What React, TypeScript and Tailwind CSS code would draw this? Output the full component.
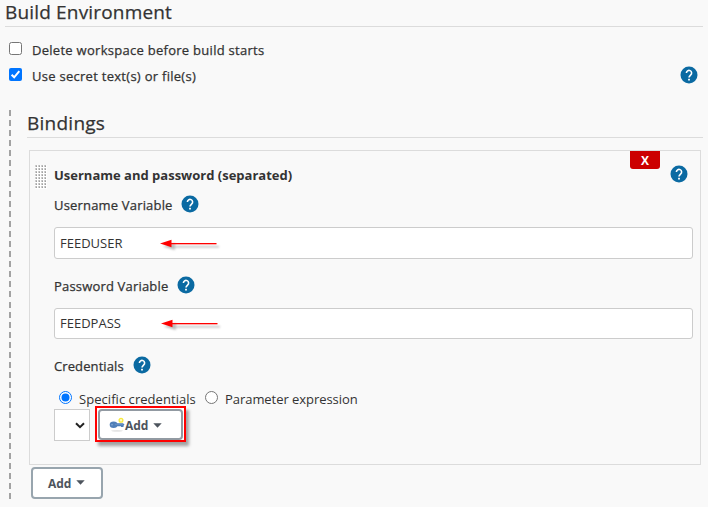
import React from 'react';

function Help() {
  return (
    <svg className="h-[18px] w-[18px] shrink-0" viewBox="0 0 18 18">
      <circle cx="9" cy="9" r="8.5" fill="#0b6aa2" />
      <path d="M6.4 7a2.6 2.6 0 1 1 4.3 1.95C9.8 9.8 9 10.3 9 11.6" fill="none" stroke="#fff" strokeWidth="1.6" />
      <rect x="8.1" y="12.8" width="1.8" height="1.7" fill="#fff" />
    </svg>
  );
}

function Checkbox({ checked = false }: { checked?: boolean }) {
  return (
    <svg className="h-[13px] w-[13px] shrink-0" viewBox="0 0 13 13">
      {checked ? (
        <>
          <rect width="13" height="13" rx="2" fill="#0075ff" />
          <path d="M2.6 6.7 5.2 9.3 10.3 3.2" fill="none" stroke="#fff" strokeWidth="2" />
        </>
      ) : (
        <rect x="0.5" y="0.5" width="12" height="12" rx="2" fill="#fff" stroke="#767676" />
      )}
    </svg>
  );
}

function Radio({ checked = false }: { checked?: boolean }) {
  return (
    <svg className="h-[13px] w-[13px] shrink-0" viewBox="0 0 13 13">
      <circle cx="6.5" cy="6.5" r="6" fill="#fff" stroke={checked ? '#0075ff' : '#767676'} />
      {checked && <circle cx="6.5" cy="6.5" r="4" fill="#0075ff" />}
    </svg>
  );
}

function Arrow() {
  return (
    <svg className="h-4 w-[64px] shrink-0 overflow-visible" viewBox="0 0 64 16">
      <g fill="#555" opacity="0.4" transform="translate(3 3)" className="blur-[1px]">
        <path d="M0 7.5 12 4v7z" />
        <rect x="11" y="7" width="45" height="1.5" />
      </g>
      <path d="M0 7.5 11.5 3.8v7.4z" fill="#f00" />
      <rect x="11" y="7" width="45.5" height="1.3" fill="#f00" />
    </svg>
  );
}

function Grip() {
  const cells: React.ReactNode[] = [];
  for (let r = 0; r < 8; r++) {
    for (let c = 0; c < 4; c++) {
      cells.push(<rect key={`${r}-${c}`} x={c * 3} y={r * 3} width="2" height="2" fill="#cfcfcf" />);
      cells.push(<rect key={`${r}-${c}b`} x={c * 3 + 1} y={r * 3} width="1" height="1" fill="#b8b8b8" />);
      cells.push(<rect key={`${r}-${c}c`} x={c * 3 + 1} y={r * 3 + 1} width="1" height="1" fill="#a0a0a0" />);
    }
  }
  return (
    <svg className="h-6 w-3 shrink-0" viewBox="0 0 12 24" shapeRendering="crispEdges">
      <rect width="12" height="24" fill="#fff" />
      {cells}
    </svg>
  );
}

function Key() {
  return (
    <svg className="h-4 w-4 shrink-0" viewBox="0 0 16 16">
      <ellipse cx="8" cy="13.8" rx="6" ry="0.9" fill="#e4e4e4" />
      <circle cx="12" cy="3.2" r="1.9" fill="#fffbc0" stroke="#f7ea3c" strokeWidth="1.3" />
      <ellipse cx="4.6" cy="7.8" rx="3.9" ry="3.3" fill="#4f7fb8" />
      <path d="M7 6.2h7l1.5 1.3-1 1.2v1.4h-2.5V9.3H7z" fill="#4f7fb8" />
      <circle cx="3" cy="7.7" r="0.8" fill="#8fb0d8" />
      <path d="M6 7.3h8" stroke="#7199cc" strokeWidth="0.7" />
    </svg>
  );
}

function Caret() {
  return (
    <svg className="h-[5px] w-[9px] shrink-0" viewBox="0 0 9 5">
      <path d="M0.3 0.3h8.4L4.5 4.7z" fill="#4d545d" />
    </svg>
  );
}

export default function App() {
  return (
    <div className="h-[507px] w-[708px] overflow-hidden whitespace-nowrap bg-[#f9f9f9] pl-[5px] pr-[5px] font-['Open_Sans','Noto_Sans',sans-serif] text-[13px] text-[#333]">
      <h1 className="h-[27px] border-b border-[#dcdcdc] text-[19px] leading-[25px] tracking-[0.17px] [-webkit-text-stroke:0.25px_#333]">Build Environment</h1>
      <div className="mt-[10px] flex h-[26px] pl-1">
        <div className="mt-[5px]"><Checkbox /></div>
        <span className="ml-[10px] leading-[27px] tracking-[0.28px] [-webkit-text-stroke:0.25px_#333]">Delete workspace before build starts</span>
      </div>
      <div className="flex h-[26px] pl-1">
        <div className="mt-[5px]"><Checkbox checked /></div>
        <span className="ml-[10px] leading-[27px] tracking-[0.28px] [-webkit-text-stroke:0.25px_#333]">Use secret text(s) or file(s)</span>
        <div className="ml-auto mr-[5px] mt-[3px]"><Help /></div>
      </div>

      <div className="ml-1 mt-[21px] flex h-[389px]">
        <div className="h-[389px] w-[2px] shrink-0 bg-[repeating-linear-gradient(to_bottom,#a3a3a3_0px,#a3a3a3_6px,transparent_6px,transparent_10.08px)]" />
        <div className="ml-4 flex-1">
          <h2 className="h-[28px] border-b border-[#dcdcdc] text-[19px] leading-[26px] tracking-[0.25px] [-webkit-text-stroke:0.25px_#333]">Bindings</h2>
          <section className="ml-[2px] mr-[2px] mt-[12px] h-[315px] border border-[#dcdcdc]">
            <div className="flex h-[38px] pl-[5px]">
              <div className="mt-[14px]"><Grip /></div>
              <span className="ml-[7px] mt-[14px] font-bold leading-5">Username and password (separated)</span>
              <button className="ml-auto flex h-[18px] w-[30px] items-center justify-center rounded-b-[3px] bg-[#c00] pt-px text-[12px] font-bold text-white">X</button>
              <div className="ml-[10px] mr-[12px] mt-[14px]"><Help /></div>
            </div>
            <div className="pl-6 pr-[7px]">
              <div className="flex h-[38px]">
                <span className="mt-[6px] leading-5 tracking-[0.18px] [-webkit-text-stroke:0.25px_#333]">Username Variable</span>
                <div className="ml-[8px] mt-[6px]"><Help /></div>
              </div>
              <div className="flex h-8 items-center rounded-[3px] border border-[#ccc] bg-white pl-[5px] pt-[2px]">
                <span className="w-[100px]">FEEDUSER</span>
                <Arrow />
              </div>
              <div className="flex h-[49px]">
                <span className="mt-[17px] leading-5 tracking-[0.18px] [-webkit-text-stroke:0.25px_#333]">Password Variable</span>
                <div className="ml-[9px] mt-[17px]"><Help /></div>
              </div>
              <div className="flex h-[31px] items-center rounded-[3px] border border-[#ccc] bg-white pl-[5px]">
                <span className="w-[101px] pt-px">FEEDPASS</span>
                <Arrow />
              </div>
              <div className="flex h-[50px]">
                <span className="mt-[17px] leading-5 tracking-[0.1px] [-webkit-text-stroke:0.25px_#333]">Credentials</span>
                <div className="ml-[9px] mt-[17px]"><Help /></div>
              </div>
              <div className="flex h-5 pl-[5px]">
                <div className="mt-[2px]"><Radio checked /></div>
                <span className="ml-[7px] w-[126px] leading-5 tracking-[0.05px]">Specific credentials</span>
                <div className="mt-[2px]"><Radio /></div>
                <span className="ml-[7px] leading-5 tracking-[-0.05px]">Parameter expression</span>
              </div>
              <div className="flex">
                <div className="flex h-8 w-9 items-center justify-end border border-[#ccc] bg-white pr-1">
                  <svg className="h-[7px] w-[10px]" viewBox="0 0 10 7"><path d="M1 1.2 5 5.2 9 1.2" fill="none" stroke="#222" strokeWidth="2" /></svg>
                </div>
                <div className="-mt-[3px] ml-[5px] h-[36px] w-[91px] border-2 border-[#f00] bg-white px-px pt-px shadow-[3px_4px_3px_rgba(0,0,0,0.35)]">
                  <button className="flex h-full w-full items-center rounded-[4px] border-2 border-[#929aa2] bg-white pl-[9px] text-[12px] font-bold text-[#4d545d]">
                    <Key />
                    <span className="pt-[2px]">Add</span>
                    <span className="ml-[5px] pt-px"><Caret /></span>
                  </button>
                </div>
              </div>
            </div>
          </section>
          <button className="ml-1 mt-[2px] flex h-8 w-[72px] items-center rounded-[4px] border-2 border-[#98a5ae] bg-white pl-[15px] text-[12px] font-bold text-[#4d545d]">
            <span className="pt-[2px]">Add</span>
            <span className="-mt-px ml-[5px] flex"><Caret /></span>
          </button>
        </div>
      </div>
    </div>
  );
}
